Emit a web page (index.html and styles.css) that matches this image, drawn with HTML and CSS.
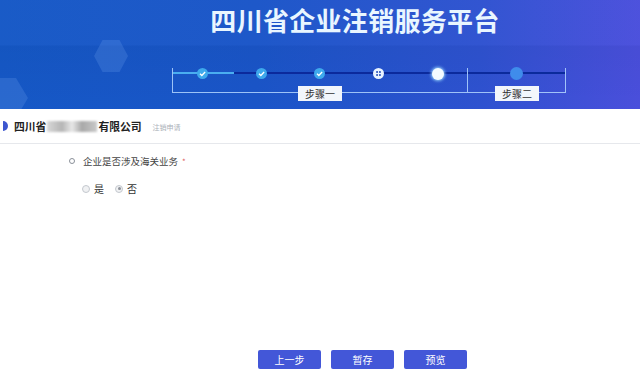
FILE: index.html
```html
<!DOCTYPE html>
<html lang="zh">
<head>
<meta charset="utf-8">
<link rel="stylesheet" href="styles.css">
</head>
<body>
<header class="banner">
  <div class="hex hex-a"></div>
  <div class="hex hex-b"></div>
  <h1 class="title">四川省企业注销服务平台</h1>
  <div class="steps">
    <div class="seg seg-one">
      <div class="track done-part"></div>
      <div class="cell"><span class="dot done"><svg viewBox="0 0 10 10"><path d="M2.7 5.2 L4.4 6.8 L7.4 3.6" fill="none" stroke="#fff" stroke-width="1.2"/></svg></span></div>
      <div class="cell"><span class="dot done"><svg viewBox="0 0 10 10"><path d="M2.7 5.2 L4.4 6.8 L7.4 3.6" fill="none" stroke="#fff" stroke-width="1.2"/></svg></span></div>
      <div class="cell"><span class="dot done"><svg viewBox="0 0 10 10"><path d="M2.7 5.2 L4.4 6.8 L7.4 3.6" fill="none" stroke="#fff" stroke-width="1.2"/></svg></span></div>
      <div class="cell"><span class="dot cur"><svg viewBox="0 0 10 10"><circle cx="3.7" cy="3.7" r="0.9" fill="#1f4ab8"/><circle cx="6.3" cy="3.7" r="0.9" fill="#1f4ab8"/><circle cx="3.7" cy="6.3" r="0.9" fill="#1f4ab8"/><circle cx="6.3" cy="6.3" r="0.9" fill="#1f4ab8"/></svg></span></div>
      <div class="cell"><span class="dot glow"></span></div>
      <span class="label">步骤一</span>
    </div>
    <div class="seg seg-two">
      <div class="cell"><span class="dot todo"></span></div>
      <span class="label">步骤二</span>
    </div>
  </div>
</header>
<main class="content">
  <div class="company">
    <span class="marker"></span>
    <span class="cname">四川省<span class="blur"></span>有限公司</span>
    <span class="sub">注销申请</span>
  </div>
  <div class="question">
    <span class="qdot"></span>
    <span class="qtext">企业是否涉及海关业务</span>
    <span class="star">*</span>
  </div>
  <div class="options">
    <label class="opt"><span class="radio"></span>是</label>
    <label class="opt"><span class="radio on"></span>否</label>
  </div>
  <div class="actions">
    <button class="btn">上一步</button>
    <button class="btn">暂存</button>
    <button class="btn">预览</button>
  </div>
</main>
</body>
</html>
```
FILE: styles.css
```css
* { box-sizing: border-box; }
html, body { margin: 0; padding: 0; }
body {
  width: 640px;
  height: 377px;
  overflow: hidden;
  background: #fff;
  font-family: "Noto Sans CJK SC", "Noto Sans", sans-serif;
}
.banner {
  position: relative;
  height: 109px;
  background:
    linear-gradient(180deg, rgba(255,255,255,0.02) 0, rgba(255,255,255,0.02) 45px, rgba(0,0,0,0.03) 46px, rgba(0,0,0,0) 109px),
    linear-gradient(90deg, #1558c6 0%, #1a55c8 40%, #2e52d0 75%, #4a4fdc 100%);
  overflow: hidden;
  padding-top: 1px;
}
.hex {
  position: absolute;
  background: rgba(120,170,240,0.22);
  clip-path: polygon(25% 0, 75% 0, 100% 50%, 75% 100%, 25% 100%, 0 50%);
}
.hex-a { left: 94px; top: 40px; width: 34px; height: 32px; }
.hex-b { left: -20px; top: 78px; width: 48px; height: 40px; }
.title {
  margin: 3px 0 0 70px;
  text-align: center;
  font-size: 26px;
  line-height: 32px;
  font-weight: 700;
  color: #e9f6ff;
  letter-spacing: 0.3px;
}
.steps {
  display: flex;
  margin: 32px 0 0 172px;
}
.seg {
  position: relative;
  display: flex;
  height: 25px;
  border-left: 1px solid rgba(180,215,255,0.85);
  border-bottom: 1px solid rgba(180,215,255,0.85);
}
.seg::before {
  content: "";
  position: absolute;
  left: 0; right: 0; top: 4px;
  height: 2px;
  background: #0b2a9c;
}
.seg-one { width: 295px; }
.seg-two { width: 99px; border-right: 1px solid rgba(180,215,255,0.85); }
.track.done-part {
  position: absolute;
  left: 0; top: 4px;
  width: 61px; height: 2px;
  background: #4aaef0;
  z-index: 1;
}
.cell {
  position: relative;
  z-index: 2;
  flex: 1;
  display: flex;
  justify-content: center;
  align-items: flex-start;
}
.dot {
  display: block;
  border-radius: 50%;
  margin-top: 0;
  width: 11px; height: 11px;
}
.dot svg { width: 11px; height: 11px; display: block; }
.dot.done { background: #3ea9ec; }
.dot.cur { background: #eaf4ff; }
.dot.glow { background: #f4fbff; box-shadow: 0 0 3px 1px rgba(160,220,255,0.9); width: 12px; height: 12px; margin-top: -0.5px; }
.dot.todo { background: #3f8ceb; width: 13px; height: 13px; margin-top: -1px; }
.label {
  position: absolute;
  left: 50%;
  bottom: -9px;
  transform: translateX(-50%);
  background: #f2f6fb;
  color: #333;
  font-size: 10px;
  line-height: 15px;
  padding: 0 7px;
  white-space: nowrap;
  z-index: 3;
}
.seg-two .label { left: 49px; }
.content { padding-top: 8px; }
.company {
  display: flex;
  align-items: center;
  height: 18px;
  padding-left: 3px;
  border-bottom: 1px solid #e6e8ec;
  box-sizing: content-box;
  padding-bottom: 8px;
}
.marker {
  width: 5px; height: 10px;
  background: #3d56cf;
  border-radius: 0 6px 6px 0;
  margin-right: 6px;
}
.cname {
  font-size: 10.8px;
  font-weight: 700;
  color: #222;
  display: flex;
  align-items: center;
}
.blur {
  display: inline-block;
  width: 50px; height: 11px;
  background: linear-gradient(90deg, #d8d8d8, #b5b5b5 30%, #e8e8e8 50%, #a8a8a8 70%, #c9c9c9);
  filter: blur(1px);
  margin: 0 1px;
}
.sub {
  font-size: 7px;
  color: #aab0b8;
  margin-left: 11px;
  margin-top: 1px;
}
.question {
  display: flex;
  align-items: center;
  margin: 10px 0 0 69px;
  font-size: 9.5px;
  color: #444;
}
.qdot {
  width: 6px; height: 6px;
  border: 1px solid #8a9099;
  border-radius: 50%;
  margin-right: 8px;
}
.star { color: #e06060; margin-left: 4px; font-size: 8px; }
.options {
  display: flex;
  gap: 11px;
  margin: 13px 0 0 82px;
  font-size: 10px;
  color: #333;
}
.opt { display: flex; align-items: center; }
.radio {
  width: 8px; height: 8px;
  border: 1px solid #c4c8ce;
  border-radius: 50%;
  background: #f0f1f3;
  margin-right: 4px;
  position: relative;
}
.radio.on::after {
  content: "";
  position: absolute;
  left: 1.5px; top: 1.5px;
  width: 3px; height: 3px;
  border-radius: 50%;
  background: #8c9199;
}
.actions {
  display: flex;
  gap: 10px;
  margin: 154px 0 0 258px;
}
.btn {
  width: 63px;
  height: 19px;
  border: none;
  border-radius: 2px;
  background: #4357d8;
  color: #fff;
  font-family: inherit;
  font-size: 10px;
  padding: 0;
}
```
